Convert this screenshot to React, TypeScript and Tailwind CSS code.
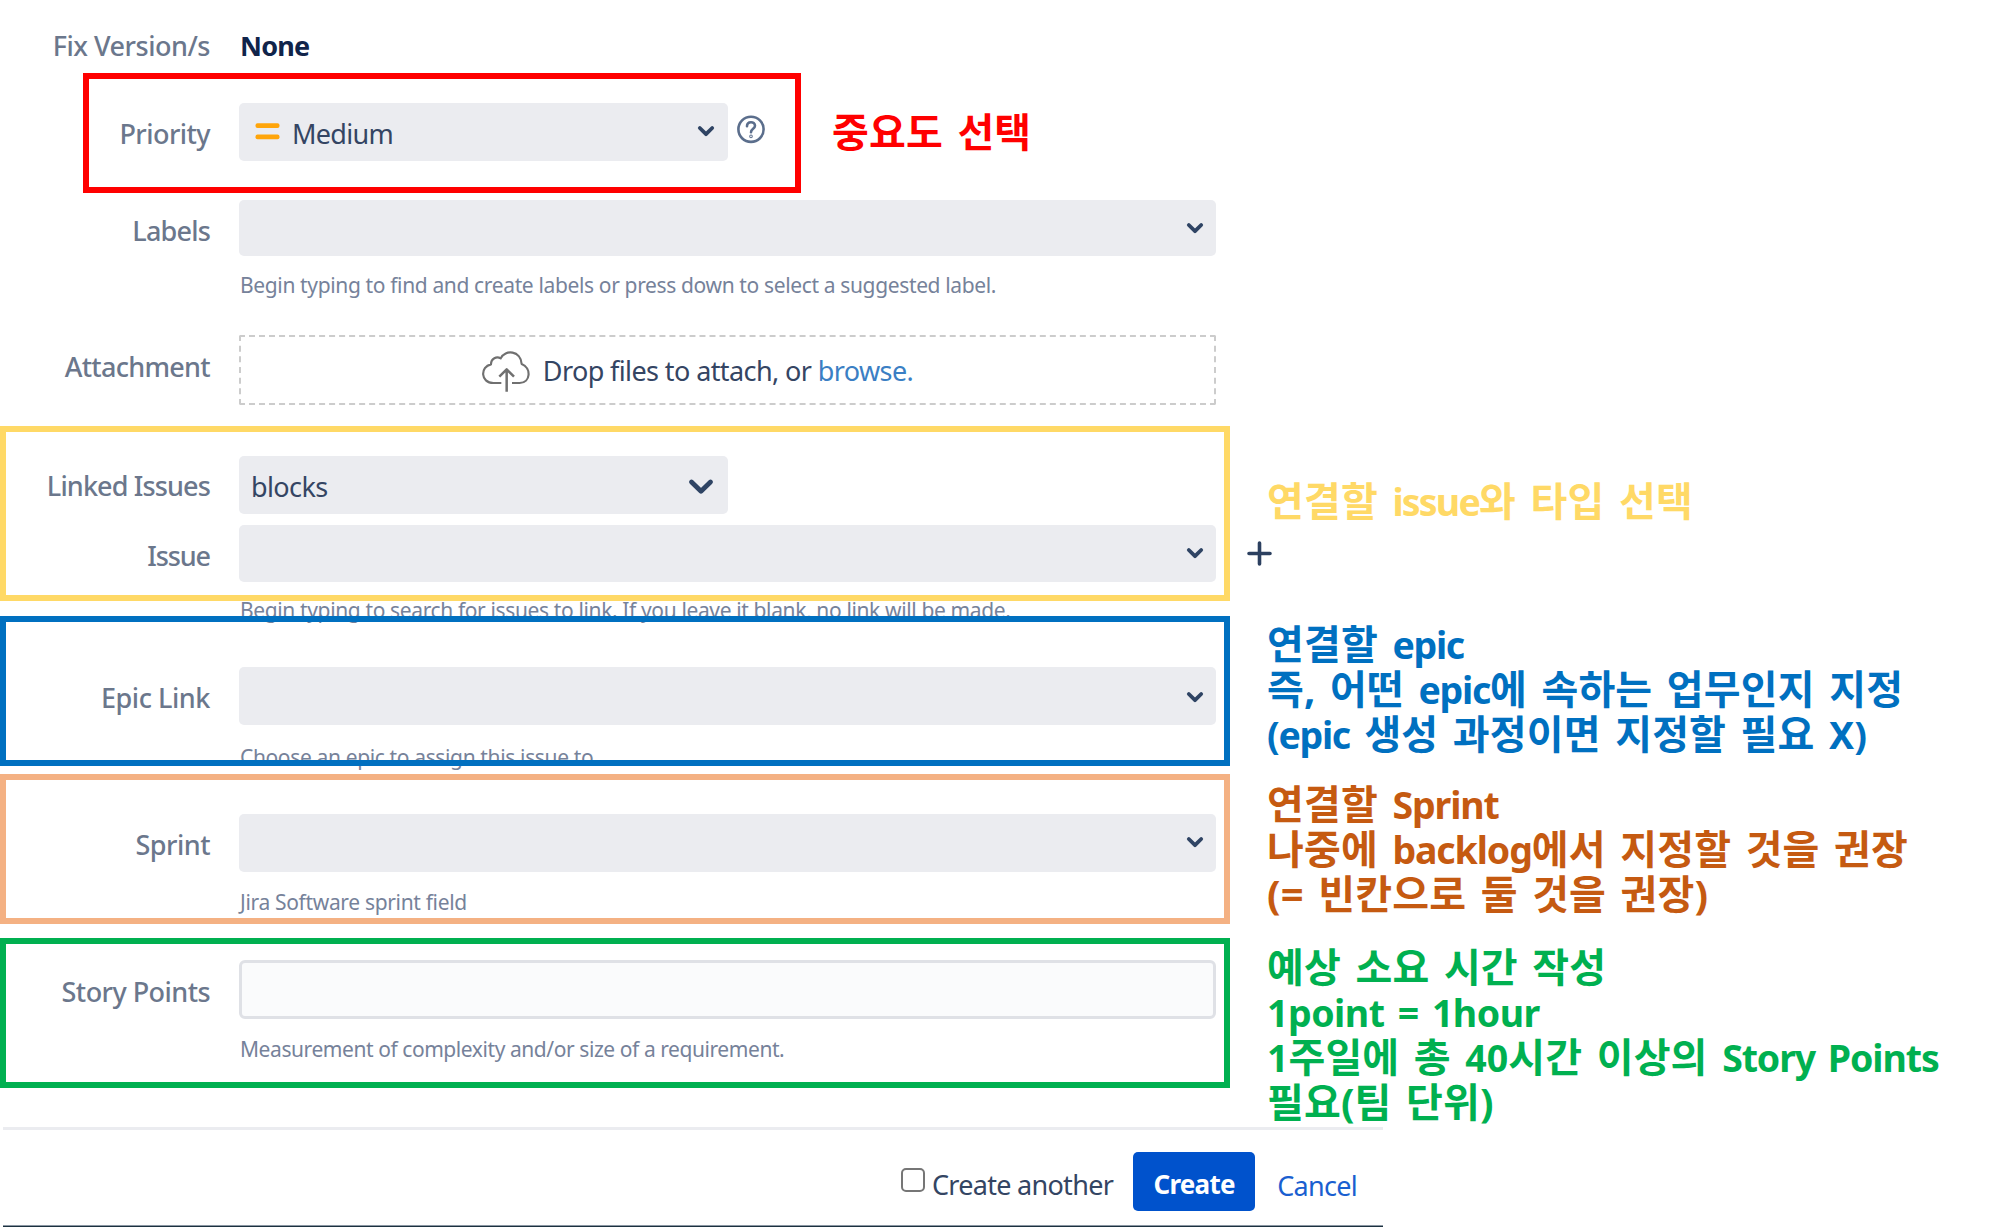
import React from "react";
import type { ReactNode } from "react";

type RowProps = {
  label: string;
  tracking: string;
  height: string;
  pad?: string;
  children: ReactNode;
};

function Row({ label, tracking, height, pad = "pt-[3px]", children }: RowProps) {
  return (
    <div className={`flex shrink-0 items-start ${height}`}>
      <label className={`w-[210px] shrink-0 whitespace-nowrap text-right font-medium leading-[56px] text-[#6b778c] ${pad} ${tracking}`}>
        {label}
      </label>
      <div className="ml-[29px] w-[977px] shrink-0">{children}</div>
    </div>
  );
}

function Chevron() {
  return (
    <svg className="h-[12px] w-[18px]" viewBox="0 0 18 12" fill="none" stroke="#2f4464" strokeWidth="3.8" strokeLinecap="round" strokeLinejoin="round">
      <path d="M2.8 3 9 9.2 15.2 3" />
    </svg>
  );
}

function Select({ height = "h-[57px]", pad = "pt-[22px]" }: { height?: string; pad?: string }) {
  return (
    <div className={`flex items-start justify-end rounded-[5px] bg-[#ebecf0] pr-[12px] ${pad} ${height}`}>
      <Chevron />
    </div>
  );
}

function Help({ children, tracking, margin = "mt-[17px]" }: { children: ReactNode; tracking: string; margin?: string }) {
  return <p className={`whitespace-nowrap pl-px text-[21px] leading-[24px] text-[#76829a] ${margin} ${tracking}`}>{children}</p>;
}

function Note({ color, children }: { color: string; children: ReactNode }) {
  return (
    <div className={`whitespace-nowrap font-['Noto_Sans','Noto_Sans_CJK_KR',sans-serif] text-[40px] font-bold leading-[45px] tracking-[0.15px] [word-spacing:4px] ${color}`}>
      {children}
    </div>
  );
}

function Latin({ t, children }: { t: string; children: ReactNode }) {
  return <span className={`text-[37.5px] font-bold leading-none ${t}`}>{children}</span>;
}

function CloudUpload() {
  return (
    <svg className="h-[43px] w-[50px]" viewBox="120 85 150 129" fill="none" stroke="#707070" strokeWidth="6.5" strokeLinejoin="round">
      <path d="M181 187H157C118 187 117 138 150 131C150 113 167 106 179 113C192 85 240 90 242 130C272 142 269 187 236 187H213" />
      <path d="M197 213V146M175 168 197 146 219 168" strokeWidth="7.5" />
    </svg>
  );
}

function Frame({ place, color }: { place: string; color: string }) {
  return <div className={`pointer-events-none absolute border-[6px] ${place} ${color}`} />;
}

export default function App() {
  return (
    <main className="relative h-[1227px] w-[2004px] overflow-hidden bg-white font-['Noto_Sans',sans-serif] text-[27px] text-[#172b4d]">
      <div className="flex h-[1127px]">
        <section className="flex w-[1267px] shrink-0 flex-col">
          <Row label="Fix Version/s" tracking="tracking-[-0.48px]" height="h-[103px]" pad="pt-[18px]">
            <div className="pl-px pt-[18px] font-bold leading-[56px] tracking-[-0.8px] text-[#10244a]">None</div>
          </Row>

          <Row label="Priority" tracking="tracking-[-0.55px]" height="h-[97px]">
            <div className="flex items-start">
              <div className="flex h-[58px] w-[489px] items-start rounded-[5px] bg-[#ebecf0] pl-[16px] pr-[13px]">
                <svg className="mt-[20px] h-[17px] w-[25px]" viewBox="0 0 25 17" fill="#ffa50a">
                  <rect x="0.5" y="0.3" width="24" height="4.6" rx="2" />
                  <rect x="0.5" y="11.5" width="24" height="4.8" rx="2" />
                </svg>
                <span className="ml-[12px] grow pt-[3px] leading-[56px] tracking-[-0.7px] text-[#344563]">Medium</span>
                <span className="pt-[22px]"><Chevron /></span>
              </div>
              <svg className="ml-[8px] mt-[11px] h-[31px] w-[30px]" viewBox="0 0 30 31" fill="none" stroke="#5b6e8c" strokeWidth="2.6" strokeLinecap="round">
                <circle cx="15" cy="15.3" r="12.6" />
                <path d="M11 12.3C11 6.8 19 7 19 11.8C19 14.8 15 14.8 15 18.2" />
                <circle cx="15" cy="22.4" r="0.5" />
              </svg>
              <div className="ml-[66px] mt-[6px]">
                <Note color="text-[#ff0000]">중요도 선택</Note>
              </div>
            </div>
          </Row>

          <Row label="Labels" tracking="tracking-[-0.8px]" height="h-[135px]">
            <Select height="h-[56px]" />
            <Help tracking="tracking-[-0.36px]">Begin typing to find and create labels or press down to select a suggested label.</Help>
          </Row>

          <Row label="Attachment" tracking="tracking-[-0.7px]" height="h-[121px]" pad="pt-[4px]">
            <div className="flex h-[70px] items-center justify-center rounded-[2px] border-2 border-dashed border-[#cccccc] pr-[61px] text-[#344563]">
              <CloudUpload />
              <span className="ml-[12px] pt-[2px] tracking-[-0.6px]">
                Drop files to attach, or <a className="text-[#3b7fc4]">browse.</a>
              </span>
            </div>
          </Row>

          <Row label="Linked Issues" tracking="tracking-[-0.86px]" height="h-[69px]" pad="pt-[2px]">
            <div className="flex h-[58px] w-[489px] items-start justify-between rounded-[5px] bg-[#ebecf0] pl-[12px] pr-[14px]">
              <span className="pt-[3px] leading-[56px] tracking-[-0.6px] text-[#344563]">blocks</span>
              <svg className="mt-[22px] h-[17px] w-[26px]" viewBox="0 0 26 17" fill="none" stroke="#2f4464" strokeWidth="4.8" strokeLinecap="round" strokeLinejoin="round">
                <path d="M3.5 4 13 13.2 22.5 4" />
              </svg>
            </div>
          </Row>

          <Row label="Issue" tracking="tracking-[-1.1px]" height="h-[142px]">
            <div className="relative">
              <Select />
              <svg className="absolute -right-[56px] top-[16px] h-[25px] w-[25px]" viewBox="0 0 25 25" stroke="#2c4060" strokeWidth="3.6" strokeLinecap="round">
                <path d="M12.5 2V23M2 12.5H23" />
              </svg>
            </div>
            <Help tracking="tracking-[-0.37px]" margin="mt-[16px]">Begin typing to search for issues to link. If you leave it blank, no link will be made.</Help>
          </Row>

          <Row label="Epic Link" tracking="tracking-[-0.45px]" height="h-[147px]">
            <Select height="h-[58px]" pad="pt-[24px]" />
            <Help tracking="tracking-[-0.36px]" margin="mt-[20px]">Choose an epic to assign this issue to</Help>
          </Row>

          <Row label="Sprint" tracking="tracking-[-0.5px]" height="h-[146px]">
            <Select height="h-[58px]" pad="pt-[22px]" />
            <Help tracking="tracking-[-0.33px]" margin="mt-[18px]">Jira Software sprint field</Help>
          </Row>

          <Row label="Story Points" tracking="tracking-[-0.55px]" height="h-[167px]" pad="pt-[4px]">
            <div className="h-[59px] rounded-[6px] border-[3px] border-[#dfe1e6] bg-[#fafbfc]" />
            <Help tracking="tracking-[-0.43px]" margin="mt-[18px]">Measurement of complexity and/or size of a requirement.</Help>
          </Row>
        </section>

        <aside className="flex flex-col pt-[478px]">
          <Note color="text-[#ffd966]">
            연결할 <Latin t="tracking-[-1.8px]">issue</Latin>와 타입 선택
          </Note>
          <div className="mt-[98px]">
            <Note color="text-[#0070c0]">
              <div>연결할 <Latin t="tracking-[-1.3px]">epic</Latin></div>
              <div>즉, 어떤 <Latin t="tracking-[-1.3px]">epic</Latin>에 속하는 업무인지 지정</div>
              <div><Latin t="tracking-[-1.3px]">(epic</Latin> 생성 과정이면 지정할 필요 <Latin t="tracking-normal">X)</Latin></div>
            </Note>
          </div>
          <div className="mt-[25px]">
            <Note color="text-[#c55a11]">
              <div>연결할 <Latin t="tracking-[-1.1px]">Sprint</Latin></div>
              <div>나중에 <Latin t="tracking-[-1.1px]">backlog</Latin>에서 지정할 것을 권장</div>
              <div>(= 빈칸으로 둘 것을 권장)</div>
            </Note>
          </div>
          <div className="mt-[28px]">
            <Note color="text-[#00b050]">
              <div>예상 소요 시간 작성</div>
              <div><Latin t="tracking-[-0.5px]">1point = 1hour</Latin></div>
              <div><Latin t="tracking-normal">1</Latin>주일에 총 <Latin t="tracking-normal">40</Latin>시간 이상의 <Latin t="tracking-[-1.1px]">Story Points</Latin></div>
              <div>필요(팀 단위)</div>
            </Note>
          </div>
        </aside>
      </div>

      <footer className="ml-[3px] flex h-[100px] w-[1380px] flex-col border-t-[3px] border-[#ebecf0]">
        <div className="flex h-[95px] items-start justify-end pr-[26px] pt-[22px]">
          <label className="flex items-start tracking-[-0.7px] text-[#344563]">
            <input type="checkbox" className="mt-[16px] h-[24px] w-[24px] appearance-none rounded-[5px] border-[2.5px] border-[#767676] bg-white" />
            <span className="ml-[7px] pt-[5px] leading-[56px]">Create another</span>
          </label>
          <button className="ml-[20px] h-[59px] w-[122px] rounded-[5px] bg-[#0052cc] pt-[5px] text-[26px] font-bold leading-[54px] tracking-[-0.7px] text-white">Create</button>
          <a className="ml-[22px] pt-[6px] leading-[56px] tracking-[-0.7px] text-[#1a5fd0]">Cancel</a>
        </div>
        <div className="h-px bg-[#8b97a3]" />
        <div className="h-px bg-[#1c313f]" />
      </footer>

      <Frame place="left-[83px] top-[73px] h-[120px] w-[718px]" color="border-[#ff0000]" />
      <Frame place="left-0 top-[426px] h-[175px] w-[1230px]" color="border-[#ffd966]" />
      <Frame place="left-0 top-[616px] h-[150px] w-[1230px]" color="border-[#0070c0]" />
      <Frame place="left-0 top-[774px] h-[150px] w-[1230px]" color="border-[#f4b183]" />
      <Frame place="left-0 top-[938px] h-[150px] w-[1230px]" color="border-[#00b050]" />
    </main>
  );
}
